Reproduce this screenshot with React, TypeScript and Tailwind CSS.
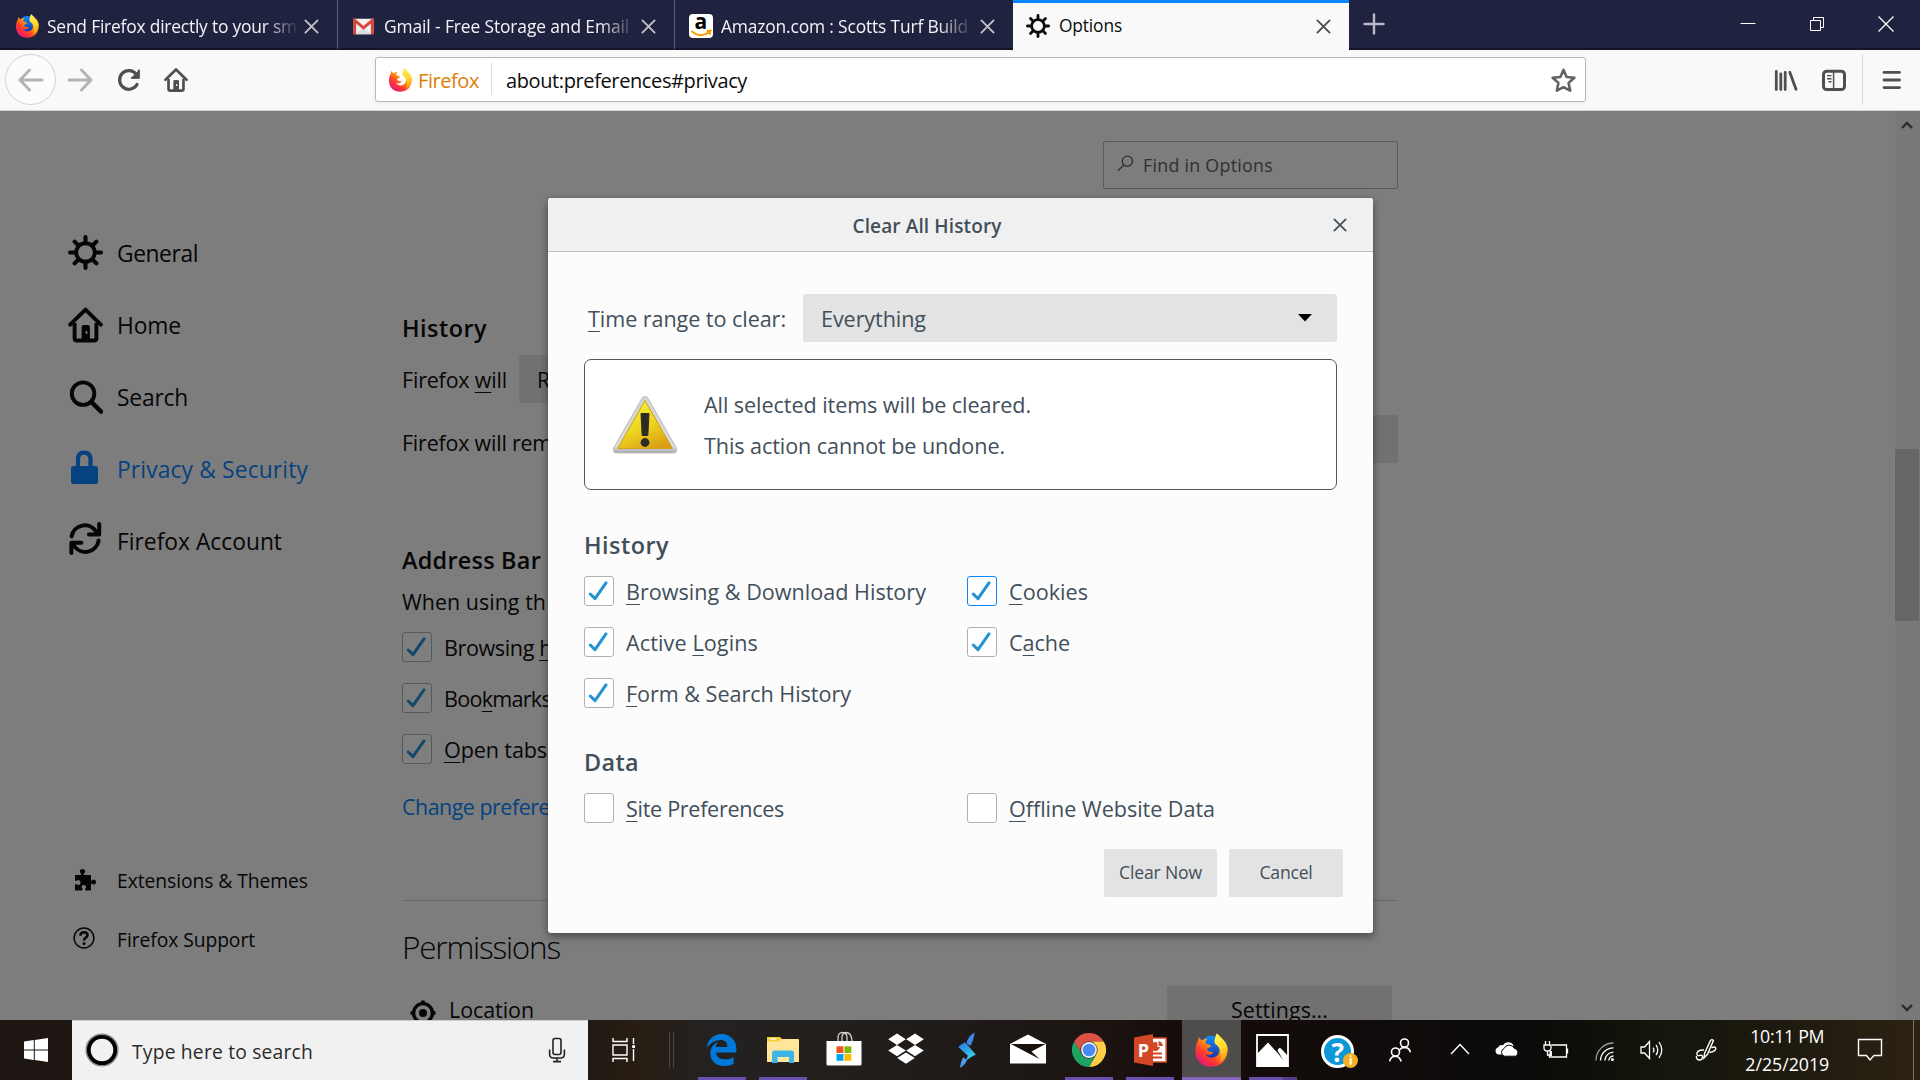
import React, { useLayoutEffect, useRef } from "react";

/* Single line of text whose tracking is computed so that it spans `w` pixels. */
function T({ w, className = "", children }: { w?: number; className?: string; children: React.ReactNode }) {
  const ref = useRef<HTMLSpanElement>(null);
  useLayoutEffect(() => {
    const el = ref.current;
    if (!el || !w) return;
    el.style.letterSpacing = "0px";
    const natural = el.getBoundingClientRect().width;
    const n = (el.textContent || "").length;
    el.style.letterSpacing = `${(w - natural) / n}px`;
  }, [w]);
  return (
    <span ref={ref} className={`inline-block w-fit shrink-0 whitespace-nowrap ${className}`}>
      {children}
    </span>
  );
}

const U = ({ children }: { children: React.ReactNode }) => (
  <span className="underline decoration-1 underline-offset-[4px] [text-decoration-skip-ink:none]">{children}</span>
);

function Firefox({ id, hollow, className }: { id: string; hollow?: boolean; className: string }) {
  return (
    <svg viewBox="0 0 32 32" className={className}>
      <defs>
        <linearGradient id={`${id}a`} x1="0.85" y1="0.1" x2="0.2" y2="0.95">
          <stop offset="0" stopColor="#ffd31a" />
          <stop offset="0.4" stopColor="#ff9a0c" />
          <stop offset="0.7" stopColor="#ff3a2e" />
          <stop offset="1" stopColor="#e5177b" />
        </linearGradient>
        <linearGradient id={`${id}b`} x1="0.5" y1="0" x2="0.5" y2="1">
          <stop offset="0" stopColor="#0a8cff" />
          <stop offset="1" stopColor="#1b2f9c" />
        </linearGradient>
        <linearGradient id={`${id}c`} x1="0.3" y1="0" x2="0.6" y2="1">
          <stop offset="0" stopColor="#fff44f" />
          <stop offset="0.6" stopColor="#ffd22a" />
          <stop offset="1" stopColor="#ff980e" />
        </linearGradient>
      </defs>
      <circle cx="16.5" cy="14" r="11.3" fill={hollow ? "#ffffff" : `url(#${id}b)`} />
      <path
        d="M4.6 3.6C4.4 5.6 4 7.4 2.4 10C-1 19 3 31.8 16 31.8C26 31.8 32 24.5 31.5 15C31.3 9 27 6 21.5 .4C20 4 18.8 7 19.8 10C24 12 25 16 23 20C20 24.4 13 24.2 10.8 20C14 21.4 17.2 20.4 18.3 17.8C15 18 12 17.2 12.3 14.8L16 12.6C16 10.4 12 11 11 9.4C10.6 8 11.6 6.4 13 5.4C10.4 5.2 9 6 8 7C6.4 6.4 5.4 5.2 4.6 3.6Z"
        fill={`url(#${id}a)`}
      />
      <path
        d="M21.5 .4C27 6 31.3 9 31.5 15C31.5 20 28 25 24 27C27 21 26 14 19.8 10C18.8 7 20 4 21.5 .4Z"
        fill={`url(#${id}c)`}
      />
    </svg>
  );
}

const Gear = ({ className }: { className: string }) => (
  <svg viewBox="0 0 34 34" className={className} fill="none" stroke="currentColor" strokeLinecap="round">
    <circle cx="17" cy="17" r="9" strokeWidth="3.8" />
    <path
      strokeWidth="4"
      d="M17 2V7M17 27V32M2 17H7M27 17H32M6.4 6.4L9.5 9.5M24.5 24.5L27.6 27.6M27.6 6.4L24.5 9.5M9.5 24.5L6.4 27.6"
    />
  </svg>
);

const HomeIcon = ({ className }: { className: string }) => (
  <svg viewBox="0 0 36 36" className={className}>
    <path
      d="M2.2 17.6L18 2.2L33.8 17.6"
      fill="none"
      stroke="currentColor"
      strokeWidth="4"
      strokeLinecap="round"
      strokeLinejoin="round"
    />
    <path d="M6.8 16V31.5Q6.8 34 9.3 34H26.7Q29.2 34 29.2 31.5V16" fill="none" stroke="currentColor" strokeWidth="4" />
    <path fillRule="evenodd" d="M14 34V20Q14 18 16 18H20.5Q22.5 18 22.5 20V34ZM18 24.5V27H20V24.5Z" fill="currentColor" />
  </svg>
);

const X = ({ className, sw = 2 }: { className: string; sw?: number }) => (
  <svg viewBox="0 0 16 16" className={className} fill="none" stroke="currentColor" strokeWidth={sw} strokeLinecap="round">
    <path d="M1.5 1.5L14.5 14.5M14.5 1.5L1.5 14.5" />
  </svg>
);

function Tab({
  icon,
  title,
  w,
  className,
}: {
  icon: React.ReactNode;
  title: string;
  w: number;
  className: string;
}) {
  return (
    <div className={`flex h-[50px] shrink-0 items-center border-b-2 border-b-[#14142b] pr-[18px] text-[#f3f3f7] ${className}`}>
      <div className="flex w-[25px] shrink-0 justify-center">{icon}</div>
      <div className="ml-2 w-[252px] shrink-0 overflow-hidden pt-[3px] text-[17.4px] leading-6 [mask-image:linear-gradient(to_right,black_86%,transparent)]">
        <T w={w}>{title}</T>
      </div>
      <X className="ml-auto mt-1 size-[15px] text-[#c3c3cd]" />
    </div>
  );
}

function Chrome() {
  return (
    <header className="shrink-0">
      <div className="flex h-[50px] bg-[#202340]">
        <Tab
          className="w-[338px] border-r border-r-[#5d5f78] pl-[14px]"
          icon={<Firefox id="t" className="mt-1 size-6" />}
          title="Send Firefox directly to your sm"
          w={250}
        />
        <Tab
          className="w-[337px] border-r border-r-[#5d5f78] pl-[13px]"
          icon={
            <svg viewBox="0 0 22 17" className="mt-1 h-[17px] w-[21px]">
              <rect x="0.5" y="0.5" width="21" height="16" rx="1" fill="#f2f2f2" />
              <path d="M3 16.5L11 9L19 16.5Z" fill="#dcdcdc" />
              <path d="M1.8 16.5V2L11 10L20.2 2V16.5" fill="none" stroke="#d9453a" strokeWidth="3" />
            </svg>
          }
          title="Gmail - Free Storage and Email"
          w={245}
        />
        <Tab
          className="w-[338px] pl-[13px]"
          icon={
            <div className="relative mt-1 h-6 w-6 rounded-[4px] bg-white">
              <span className="absolute left-[6px] top-[-5px] text-[21px] font-bold leading-6 text-black">a</span>
              <svg viewBox="0 0 24 24" className="absolute inset-0 size-6" fill="none" stroke="#ff9900" strokeWidth="2">
                <path d="M2.5 17Q11 24.5 20 18.5M17.5 17.2L21.5 16.6L20.6 20.4" />
              </svg>
            </div>
          }
          title="Amazon.com : Scotts Turf Build"
          w={247}
        />
        <div className="flex h-[50px] w-[336px] items-center border-t-[3px] border-[#0a84ff] bg-[#f9f9fa] pl-[13px] pr-[18px]">
          <Gear className="-mt-px size-[24px] text-[#0c0c0d]" />
          <T w={63} className="-mt-[3px] ml-[9px] text-[17.4px] leading-6 text-[#0c0c0d]">
            Options
          </T>
          <X className="-mt-px ml-auto size-[15px] text-[#4d4d4f]" />
        </div>
        <div className="flex flex-1 items-center border-b-2 border-[#14142b] pl-[14px]">
          <svg viewBox="0 0 22 22" className="size-[22px]" stroke="#b9bac6" strokeWidth="2.4" strokeLinecap="round">
            <path d="M11 1.5V20.5M1.5 11H20.5" />
          </svg>
          <div className="ml-auto mr-[26px] flex items-center gap-[53px] text-white">
            <svg viewBox="0 0 16 16" className="size-4" stroke="currentColor" strokeWidth="1">
              <path d="M0.5 7.5H15.5" />
            </svg>
            <svg viewBox="0 0 16 16" className="size-4" fill="none" stroke="currentColor" strokeWidth="1">
              <path d="M1.5 4.5H11.5V14.5H1.5ZM4.5 4.5V1.5H14.5V11.5H11.5" />
            </svg>
            <svg viewBox="0 0 16 16" className="size-4" fill="none" stroke="currentColor" strokeWidth="1.3">
              <path d="M0.5 0.5L15.5 15.5M15.5 0.5L0.5 15.5" />
            </svg>
          </div>
        </div>
      </div>

      <div className="flex h-[61px] items-center border-b border-[#d4d4d4] bg-[#f9f9fa] pl-[5px] text-[#4f4f51]">
        <div className="-mt-px flex size-[51px] shrink-0 items-center justify-center rounded-full border border-[#d3d3d4] bg-[#fcfcfc] text-[#b4b4b5]">
          <svg viewBox="0 0 26 24" className="h-6 w-[26px]" fill="none" stroke="currentColor" strokeWidth="3" strokeLinecap="round" strokeLinejoin="round">
            <path d="M24 12H2M11.5 2L2 12L11.5 22" />
          </svg>
        </div>
        <svg viewBox="0 0 26 24" className="ml-[11px] h-6 w-[26px] text-[#b4b4b5]" fill="none" stroke="currentColor" strokeWidth="3" strokeLinecap="round" strokeLinejoin="round">
          <path d="M2 12H24M14.5 2L24 12L14.5 22" />
        </svg>
        <svg viewBox="0 0 24 24" className="ml-[24px] size-6" fill="none" stroke="currentColor" strokeWidth="3.2" strokeLinecap="round">
          <path d="M20 16.5A9.3 9.3 0 1 1 19.2 6.2" />
          <path d="M22.5 1.6V10.6H13.6Z" fill="currentColor" stroke="none" />
          <path d="M21.8 2.6V9.8H15" strokeWidth="2" strokeLinejoin="round" />
        </svg>
        <HomeIcon className="ml-[23px] size-[24px]" />

        <div className="-mt-[2px] ml-[187px] flex h-[45px] w-[1211px] items-center rounded-[3px] border border-[#b8b8b8] bg-white pl-3 pr-[9px] shadow-[0_1px_4px_rgba(0,0,0,0.06)]">
          <Firefox id="u" hollow className="mt-px size-[24px]" />
          <T w={61} className="ml-[6px] pt-[3px] text-[20px] leading-7 text-[#e07c06]">
            Firefox
          </T>
          <div className="ml-3 h-8 w-px bg-[#dcdcdc]" />
          <T w={241} className="ml-[14px] pt-[3px] text-[20px] leading-7 text-[#0c0c0d]">
            about:preferences#privacy
          </T>
          <svg viewBox="0 0 24 24" className="ml-auto mt-[2px] size-[25px]" fill="none" stroke="#626264" strokeWidth="2.5" strokeLinejoin="round">
            <path d="M12 1.8L15 8.6L22.4 9.3L16.9 14.3L18.4 21.8L12 18.4L5.6 21.8L7.1 14.3L1.6 9.3L9 8.6Z" />
          </svg>
        </div>

        <svg viewBox="0 0 24 24" className="-mt-px ml-[188px] size-6" stroke="currentColor" strokeWidth="2.8" strokeLinecap="round">
          <path d="M2.3 3.3V21.5M6.8 5.8V21.5M11.2 4.3V21.5M15.8 4.3L22 21.3" />
        </svg>
        <svg viewBox="0 0 26 24" className="-mt-px ml-[23px] h-6 w-[26px]" fill="none" stroke="currentColor">
          <rect x="2.5" y="3.2" width="21" height="18.4" rx="3.2" strokeWidth="3" />
          <path d="M12.6 3V21" strokeWidth="1.5" />
          <path d="M6 7.6H10.5M6 10.7H10.5M7.5 13.8H10.5" strokeWidth="1.4" />
        </svg>
        <div className="-mt-px ml-[15px] h-[51px] w-px bg-[#dadadb]" />
        <svg viewBox="0 0 20 20" className="-mt-px ml-[19px] size-5" stroke="currentColor" strokeWidth="2.8" strokeLinecap="round">
          <path d="M2 2.4H17.5M2 10H17.5M2 17.6H17.5" />
        </svg>
      </div>
    </header>
  );
}

function NavItem({ icon, label, w, className = "" }: { icon: React.ReactNode; label: string; w: number; className?: string }) {
  return (
    <div className={`flex h-[72px] items-center ${className}`}>
      <div className="mr-[14px] flex w-9 justify-start">{icon}</div>
      <T w={w} className="pt-[2px] text-[22.8px] leading-8">
        {label}
      </T>
    </div>
  );
}

function Sidebar() {
  return (
    <nav className="flex w-[402px] shrink-0 flex-col pl-[67px] pt-[106px] text-[#060606]">
      <NavItem icon={<Gear className="-mt-[2px] ml-px size-[35px]" />} label="General" w={81} />
      <NavItem icon={<HomeIcon className="ml-px size-[36px]" />} label="Home" w={64} />
      <NavItem
        icon={
          <svg viewBox="0 0 36 36" className="-mt-px ml-px size-[36px]" fill="none" stroke="currentColor" strokeLinecap="round">
            <circle cx="15.5" cy="14.5" r="11.6" strokeWidth="4" />
            <path d="M24 23L34 33" strokeWidth="4.6" />
          </svg>
        }
        label="Search"
        w={71}
      />
      <NavItem
        icon={
          <svg viewBox="0 0 36 36" className="-mt-[2px] size-[36px]">
            <path d="M11 18V9.5Q11 2.6 17.2 2.6Q23.5 2.6 23.5 9.5V18" fill="none" stroke="currentColor" strokeWidth="4.2" />
            <rect x="4" y="16" width="27" height="18" rx="2.6" fill="currentColor" />
          </svg>
        }
        label="Privacy & Security"
        w={191}
        className="text-[#05427f]"
      />
      <NavItem
        icon={
          <svg viewBox="0 0 36 36" className="-mt-[7px] size-[36px]" fill="none" stroke="currentColor" strokeWidth="4" strokeLinecap="round" strokeLinejoin="round">
            <path d="M4.6 16.4A13.4 13.4 0 0 1 29 11.4M32.2 4V14.4H22" />
            <path d="M31.6 20.6A13.4 13.4 0 0 1 7.2 26M4.4 33V22.8H14.4" />
          </svg>
        }
        label="Firefox Account"
        w={165}
      />
      <div className="mt-[274px] flex h-[59px] items-center">
        <svg viewBox="0 0 22 22" className="-mt-[2px] ml-[7px] mr-[21px] size-[22px]" fill="currentColor">
          <path d="M1 6H7V4.5Q5.8 3.8 5.8 2.6A2.7 2.5 0 0 1 11.2 2.6Q11.2 3.8 10 4.5V6H17V11.5H18.3Q18.8 10.6 20 10.6A1.9 2.4 0 0 1 20 15.6Q18.8 15.6 18.3 14.7H17V21.5H11.3V19.5Q12.1 18.9 12.1 18A2.3 2 0 0 0 7.5 18Q7.5 18.9 8.4 19.5V21.5H1V15.2H2.8Q3.4 16 4.4 16A2.2 2.5 0 0 0 4.4 11Q3.4 11 2.8 11.8H1Z" />
        </svg>
        <T w={191} className="text-[19.3px] leading-7">
          Extensions &amp; Themes
        </T>
      </div>
      <div className="flex h-[59px] items-center">
        <svg viewBox="0 0 22 22" className="-mt-1 ml-[6px] mr-[22px] size-[22px]" fill="none" stroke="currentColor">
          <circle cx="11" cy="11" r="9.9" strokeWidth="1.5" />
          <path d="M7.4 8.6Q7.6 5.2 11 5.2Q14.5 5.2 14.5 8.1Q14.5 9.8 12.6 10.8Q11.1 11.6 11.1 13.4" strokeWidth="2.6" />
          <circle cx="11.1" cy="16.6" r="1.1" fill="currentColor" />
        </svg>
        <T w={138} className="text-[19.3px] leading-7">
          Firefox Support
        </T>
      </div>
    </nav>
  );
}

function Check({
  on,
  dim,
  focus,
  w,
  children,
}: {
  on?: boolean;
  dim?: boolean;
  focus?: boolean;
  w?: number;
  children: React.ReactNode;
}) {
  const box = dim ? "border-[#595959] bg-[#7f7f7f]" : focus ? "border-[#0a84ff] bg-white" : "border-[#b1b1b1] bg-white";
  return (
    <div className="flex h-[30px] items-center">
      <div className={`flex size-[30px] shrink-0 items-center justify-center rounded-[3px] border ${box}`}>
        {on && (
          <svg viewBox="0 0 20 20" className="-ml-[2px] size-5" fill="none" stroke={dim ? "#12496a" : "#2292d0"} strokeWidth="3" strokeLinecap="round" strokeLinejoin="round">
            <path d="M2.3 13L7 17.6L18 1.9" />
          </svg>
        )}
      </div>
      <T w={w} className="ml-3 pt-px text-[21.6px] leading-7">
        {children}
      </T>
    </div>
  );
}

function Preferences() {
  return (
    <main className="flex w-[996px] shrink-0 flex-col pt-[30px] text-[#060606]">
      <div className="ml-auto flex h-12 w-[295px] shrink-0 items-center rounded-[2px] border border-[#5a5a5a] pl-[13px] text-[#303030]">
        <svg viewBox="0 0 18 18" className="-mt-1 mr-[9px] size-[17px]" fill="none" stroke="currentColor" strokeWidth="1.4">
          <circle cx="11" cy="6.6" r="5.4" />
          <path d="M7.2 10.6L1 16.6" />
        </svg>
        <T w={130} className="text-[17.8px] leading-6">
          Find in Options
        </T>
      </div>
      <h2 className="mt-[123px] shrink-0 text-[23.4px] font-semibold leading-8">
        <T w={85}>History</T>
      </h2>
      <div className="mt-[11px] flex h-12 shrink-0 items-center text-[21.4px]">
        <T w={105} className="pt-[2px] leading-7">
          Firefox <U>w</U>ill
        </T>
        <div className="ml-3 flex h-12 w-[400px] items-center rounded-[2px] bg-[#717171] pl-[18px] pt-[2px]">R</div>
      </div>
      <div className="mt-3 flex h-12 shrink-0 justify-between text-[21.4px]">
        <T w={150} className="pt-[14px] leading-7">
          Firefox will rem
        </T>
        <div className="h-12 w-[160px] rounded-[2px] bg-[#717171]" />
      </div>
      <h2 className="mt-[81px] shrink-0 text-[23.4px] font-semibold leading-8">
        <T w={139}>Address Bar</T>
      </h2>
      <T w={144} className="mt-3 text-[21.4px] leading-7">
        When using th
      </T>
      <div className="mt-4 flex shrink-0 flex-col gap-[21px]">
        <Check on dim w={108}>
          Browsing <U>h</U>
        </Check>
        <Check on dim w={107}>
          Boo<U>k</U>marks
        </Check>
        <Check on dim w={103}>
          <U>O</U>pen tabs
        </Check>
      </div>
      <T w={148} className="mt-[29px] text-[21.4px] leading-7 text-[#05427f]">
        Change prefere
      </T>
      <div className="mt-[79px] h-px shrink-0 bg-[#686868]" />
      <h1 className="mt-6 shrink-0 text-[31.5px] font-light leading-[44px]">
        <T w={158}>Permissions</T>
      </h1>
      <div className="mr-[6px] mt-[17px] flex h-12 shrink-0 items-center text-[21.4px]">
        <svg viewBox="0 0 26 26" className="ml-2 mt-[6px] size-[26px]" fill="none" stroke="currentColor">
          <circle cx="13" cy="13" r="9.4" strokeWidth="3.4" />
          <circle cx="13" cy="13" r="4" fill="currentColor" stroke="none" />
          <path d="M13 0.5V4M13 22V25.5M0.5 13H4M22 13H25.5" strokeWidth="3.6" />
        </svg>
        <T w={85} className="ml-[13px] leading-7">
          Location
        </T>
        <div className="ml-auto flex h-12 w-[225px] items-center justify-center rounded-[2px] bg-[#717171]">
          <T w={97} className="leading-7">
            Settings...
          </T>
        </div>
      </div>
    </main>
  );
}

function Dialog() {
  return (
    <section className="absolute left-[548px] top-[87px] flex h-[735px] w-[825px] flex-col rounded-[3px] bg-[#fcfcfc] text-[#424f5a] shadow-[0_3px_9px_rgba(0,0,0,0.45)]">
      <header className="relative flex h-[54px] shrink-0 items-center justify-center rounded-t-[3px] border-b border-[#bdbdbd] bg-[#f0f0f0]">
        <T w={149} className="-ml-[67px] pt-[2px] text-[19px] font-semibold leading-7">
          Clear All History
        </T>
        <X className="absolute right-[26px] top-5 size-[14px]" />
      </header>
      <div className="flex flex-col px-9 pt-[42px]">
        <div className="flex h-12 items-center text-[21.6px]">
          <T w={198} className="ml-1 pt-[2px] leading-7">
            <U>T</U>ime range to clear:
          </T>
          <div className="ml-auto flex h-12 w-[534px] items-center rounded-[3px] bg-[#e3e3e3] pl-[18px] pr-[25px]">
            <T w={105} className="pt-[2px] leading-7">
              Everything
            </T>
            <svg viewBox="0 0 14 8" className="ml-auto h-[8px] w-[14px]">
              <path d="M0 0H14L7 7.5Z" fill="#000" />
            </svg>
          </div>
        </div>
        <div className="mt-[17px] flex h-[131px] items-center rounded-[7px] border border-[#565656] bg-white pl-[27px]">
          <svg viewBox="0 0 66 60" className="h-[60px] w-[66px]">
            <defs>
              <linearGradient id="warn" x1="0.3" y1="0" x2="0.8" y2="1">
                <stop offset="0" stopColor="#f5ee3c" />
                <stop offset="0.5" stopColor="#eed61f" />
                <stop offset="1" stopColor="#d99a14" />
              </linearGradient>
              <linearGradient id="rim" x1="0" y1="0" x2="0" y2="1">
                <stop offset="0" stopColor="#d6d6d6" />
                <stop offset="0.9" stopColor="#dcdcdc" />
                <stop offset="1" stopColor="#a2a2a2" />
              </linearGradient>
            </defs>
            <path d="M33 1.5Q35 1.5 36 3.5L64.5 53.5Q65.5 58 61 58H5Q.5 58 1.5 53.5L30 3.5Q31 1.5 33 1.5Z" fill="url(#rim)" stroke="#c2c2c2" strokeWidth="1.2" />
            <path d="M33 5.5L60.5 53.5H5.5Z" fill="url(#warn)" stroke="#c9a51b" strokeWidth="1" strokeLinejoin="round" />
            <path d="M29 18.5H37L35.8 40.5H30.2Z" fill="#2c2c24" stroke="#2c2c24" strokeWidth="1" strokeLinejoin="round" />
            <circle cx="33" cy="47.5" r="4.4" fill="#2c2c24" />
          </svg>
          <div className="ml-[26px] flex flex-col text-[21.6px] leading-[41px]">
            <T w={327}>All selected items will be cleared.</T>
            <T w={301}>This action cannot be undone.</T>
          </div>
        </div>
        <h2 className="mt-[39px] text-[23.4px] font-semibold leading-8">
          <T w={85}>History</T>
        </h2>
        <div className="mt-[15px] grid grid-cols-[383px_1fr] gap-y-[21px]">
          <Check on w={300}>
            <U>B</U>rowsing &amp; Download History
          </Check>
          <Check on focus w={79}>
            <U>C</U>ookies
          </Check>
          <Check on w={132}>
            Active <U>L</U>ogins
          </Check>
          <Check on w={61}>
            C<U>a</U>che
          </Check>
          <Check on w={225}>
            <U>F</U>orm &amp; Search History
          </Check>
        </div>
        <h2 className="mt-[38px] text-[23.4px] font-semibold leading-8">
          <T w={55}>Data</T>
        </h2>
        <div className="mt-[15px] grid grid-cols-[383px_1fr]">
          <Check w={158}>
            <U>S</U>ite Preferences
          </Check>
          <Check w={206}>
            <U>O</U>ffline Website Data
          </Check>
        </div>
        <div className="-mr-[6px] mt-[26px] flex justify-end gap-3 text-[17.6px]">
          <button className="flex h-12 w-[113px] items-center justify-center rounded-[2px] bg-[#e3e3e3] pb-px">
            <T w={83}>Clear Now</T>
          </button>
          <button className="flex h-12 w-[114px] items-center justify-center rounded-[2px] bg-[#e3e3e3] pb-px">
            <T w={53}>Cancel</T>
          </button>
        </div>
      </div>
    </section>
  );
}

function Scrollbar() {
  return (
    <div className="ml-auto flex w-[26px] shrink-0 flex-col items-center border-l border-[#808080] bg-[#787878] pr-px text-[#2b2b2b]">
      <svg viewBox="0 0 12 8" className="mt-[10px] h-2 w-3" fill="none" stroke="currentColor" strokeWidth="2.4">
        <path d="M1 7L6 2L11 7" />
      </svg>
      <div className="mt-[320px] h-[172px] w-full bg-[#666666]" />
      <svg viewBox="0 0 12 8" className="mb-2 mt-auto h-2 w-3" fill="none" stroke="currentColor" strokeWidth="2.4">
        <path d="M1 1L6 6L11 1" />
      </svg>
    </div>
  );
}

function TaskButton({
  children,
  bar,
  active,
  second,
}: {
  children: React.ReactNode;
  bar?: boolean;
  active?: boolean;
  second?: boolean;
}) {
  return (
    <div className="flex h-full w-[61.2px] shrink-0 flex-col items-center">
      <div className={`flex w-[59px] flex-1 items-center justify-center ${active ? "bg-[#4f4d4c]" : ""}`}>{children}</div>
      <div className={`flex h-[3px] ${active ? "w-[59px] bg-[#8465bb]" : bar ? "w-12 bg-[#6c50b0]" : "w-12"}`}>
        {second && <div className="ml-auto h-[3px] w-[14px] bg-[#523e88]" />}
      </div>
    </div>
  );
}

function Taskbar() {
  return (
    <footer className="flex h-[60px] shrink-0 bg-[linear-gradient(to_right,#1e1612_0%,#1f1813_30%,#271d13_33%,#242221_37%,#211e1b_45%,#1c1613_56%,#150c0a_62%,#100c0b_72%,#0b0b09_80%,#15160c_87%,#1d190e_92%,#2c2214_100%)] text-white">
      <div className="flex w-[72px] shrink-0 items-center justify-center">
        <svg viewBox="0 0 24 24" className="size-6" fill="#fff">
          <path d="M0 3.4L9.8 2V11.4H0ZM10.8 1.9L24 0V11.4H10.8ZM0 12.4H9.8V21.9L0 20.5ZM10.8 12.4H24V24L10.8 22.1Z" />
        </svg>
      </div>
      <div className="flex w-[516px] shrink-0 items-center border-t border-[#cfcfcf] bg-[#f1f1f1] pl-[13px] pr-[21px]">
        <svg viewBox="0 0 34 34" className="-mt-px size-[34px]" fill="none">
          <circle cx="17" cy="17" r="15.6" stroke="#8a8a8a" strokeWidth="2" />
          <circle cx="17" cy="17" r="13.2" stroke="#000" strokeWidth="3.8" />
        </svg>
        <T w={181} className="ml-[13px] pt-[3px] text-[19.3px] leading-7 text-[#2b2b2b]">
          Type here to search
        </T>
        <svg viewBox="0 0 20 26" className="-mt-px ml-auto h-[26px] w-5" fill="none" stroke="#222" strokeWidth="1.6">
          <rect x="6" y="1.5" width="8" height="16" rx="2" />
          <path d="M2.6 12.5V17Q2.6 21 6.5 21H13.5Q17.4 21 17.4 17V12.5M10 21V24.4M6 24.6H14" />
        </svg>
      </div>
      <div className="flex w-[103.4px] shrink-0 items-center pl-[23px]">
        <svg viewBox="0 0 26 24" className="h-6 w-[26px]" fill="none" stroke="#fff" strokeWidth="1.4">
          <path d="M2 0V3.5H16V0M2 7H16V17H2ZM2 24V20.5H16V24M22.5 0V6M22.5 11V23" />
          <rect x="21.2" y="7.2" width="2.8" height="2.8" fill="#fff" stroke="none" />
        </svg>
        <div className="ml-[32px] h-9 w-[5px] border-x border-[#4a4744]" />
      </div>
      <TaskButton bar>
        <svg viewBox="24 8 464 496" className="mt-[3px] h-8 w-[31px]" fill="#0078d7">
          <path d="M25.714 228.163c.111-.162.23-.323.342-.485-.021.162-.045.323-.065.485h-.277zm460.572 15.508c0-44.032-7.754-84.465-28.801-122.405C416.498 47.879 343.912 8.001 258.893 8.001 118.962 7.724 40.617 113.214 26.056 227.679c42.429-61.312 117.073-121.376 220.375-124.966 0 0 109.666 0 99.419 104.957H169.997c6.369-37.386 18.554-58.986 34.339-78.926-75.048 34.9-121.85 96.096-120.742 188.315.83 71.448 50.124 144.836 120.743 171.976 83.357 31.847 192.776 7.2 240.132-21.323V363.307c-80.864 56.506-270.871 60.925-272.255-67.572h314.073v-52.064z" />
        </svg>
      </TaskButton>
      <TaskButton bar>
        <svg viewBox="0 0 32 28" className="mt-[2px] h-7 w-8">
          <path d="M0 2Q0 1 1 1H12L15 3H31Q32 3 32 4V26H0Z" fill="#ffe69a" />
          <path d="M0 5V2Q0 1 1 1H13L14.5 3L12 5.5H0Z" fill="#fccd3e" />
          <path d="M3 3H9" stroke="#fff" strokeWidth="1.2" />
          <path d="M5 27V17Q5 14.5 7 14.5H25Q27 14.5 27 17V27H22V21H10.5V27Z" fill="#3cb4e6" />
        </svg>
      </TaskButton>
      <TaskButton>
        <svg viewBox="0 0 36 36" className="mt-px size-[36px]">
          <path d="M12 10V7Q12 1.5 16.5 1.5Q21 1.5 21 7V10M16 10V6Q16.5 1.5 20.5 1.5Q25.5 2 26 10" fill="none" stroke="#cfcfcf" strokeWidth="1.3" />
          <path d="M.5 10H35.5V33Q35.5 34.5 34 34.5H2Q.5 34.5 .5 33Z" fill="#fff" />
          <path d="M10.5 15.3H17.4V22H10.5Z" fill="#f25022" />
          <path d="M18.4 15.3H25.3V22H18.4Z" fill="#7fba00" />
          <path d="M10.5 23H17.4V29.8H10.5Z" fill="#00a4ef" />
          <path d="M18.4 23H25.3V29.8H18.4Z" fill="#ffb900" />
        </svg>
      </TaskButton>
      <TaskButton>
        <svg viewBox="0 0 36 32" className="ml-px mt-px h-8 w-9" fill="#fff">
          <path d="M9 .5L17.8 6.2L9 12L.2 6.2ZM27 .5L35.8 6.2L27 12L18.2 6.2ZM9 12L17.8 17.6L9 23.2L.2 17.6ZM27 12L35.8 17.6L27 23.2L18.2 17.6ZM9.2 25L18 19.4L26.8 25L18 30.8Z" />
        </svg>
      </TaskButton>
      <TaskButton>
        <svg viewBox="0 0 20 38" className="mt-1 h-[37px] w-5">
          <defs>
            <linearGradient id="s" x1="0" y1="0" x2="0.6" y2="1">
              <stop offset="0" stopColor="#2f6fe0" />
              <stop offset="1" stopColor="#35d6ea" />
            </linearGradient>
          </defs>
          <path d="M18 .5Q17 8 13.5 14.5L9.5 11.5Q10.5 4.5 18 .5Z" fill="#3f86e6" />
          <path d="M8 10.5L19 23Q14 25.5 8.5 29.5L11 24.5L1 15.5Q2.5 13.5 8 10.5Z" fill="url(#s)" />
          <path d="M2.5 37Q3.5 31 6 26L10 28.5Q9 33.5 2.5 37Z" fill="#4f98ec" />
        </svg>
      </TaskButton>
      <TaskButton>
        <svg viewBox="0 0 36 30" className="mt-px h-[30px] w-9">
          <path d="M0 10L18 .5L36 10V29.5H0Z" fill="#fff" />
          <path d="M1 10H35.5L21.5 17.5L29.5 25Z" fill="#17110e" />
        </svg>
      </TaskButton>
      <TaskButton bar>
        <svg viewBox="0 0 32 32" className="mt-[3px] size-[34px]">
          <path d="M2.14 8A16 16 0 0 1 29.86 8H16A8 8 0 0 0 9.07 20Z" fill="#dd5144" />
          <path d="M29.86 8A16 16 0 0 1 16 32L22.93 20A8 8 0 0 0 16 8Z" fill="#ffcd46" />
          <path d="M16 32A16 16 0 0 1 2.14 8L9.07 20A8 8 0 0 0 22.93 20Z" fill="#1da362" />
          <circle cx="16" cy="16" r="7.5" fill="#f1f1f1" />
          <circle cx="16" cy="16" r="5.9" fill="#4a8af4" />
        </svg>
      </TaskButton>
      <TaskButton bar>
        <div className="relative mt-[3px] h-8 w-[33px]">
          <svg viewBox="0 0 33 32" className="absolute inset-0 h-8 w-[33px]">
            <path d="M17 4H32.2V28H17Z" fill="#fff" stroke="#d24726" strokeWidth="1.6" />
            <path d="M19 19.5H28M19 23.5H28" stroke="#d24726" strokeWidth="2" />
            <path d="M19 8.5A4.6 4.6 0 1 1 19 16.5Z" fill="#d24726" />
            <path d="M24 12.5V6.5A5.5 5.5 0 0 1 29.5 12.5Z" fill="#d24726" stroke="#fff" strokeWidth="1.2" />
            <path d="M0 3.4L19 0V32L0 28.6Z" fill="#d24726" />
          </svg>
          <span className="absolute left-[4px] top-[4px] text-[18px] font-bold leading-6 text-white">P</span>
        </div>
      </TaskButton>
      <TaskButton active>
        <Firefox id="k" className="mt-[2px] size-[34px]" />
      </TaskButton>
      <TaskButton bar second>
        <svg viewBox="0 0 33 33" className="mt-[3px] size-[33px]">
          <path d="M1 1H32V32H1Z" fill="#14100e" stroke="#fff" strokeWidth="1.8" />
          <path d="M1 20L12 8.5L22 19.5L24 22L27.5 26.5L21.5 16.5Q23 13 25 14.5L32 22V32H1Z" fill="#fff" />
        </svg>
      </TaskButton>

      <div className="flex w-[70px] shrink-0 items-center justify-center pt-1">
        <div className="relative size-[34px]">
          <div className="flex size-[33px] items-center justify-center rounded-full border-[3px] border-white bg-[#0b97d8] text-[26px] font-bold leading-none text-white">
            ?
          </div>
          <div className="absolute bottom-[1px] right-[-3px] flex size-[15px] items-center justify-center rounded-full bg-[#f5b021] text-[13px] font-bold leading-none text-white">
            i
          </div>
        </div>
      </div>
      <div className="flex w-[54px] shrink-0 items-center justify-center">
        <svg viewBox="0 0 24 24" className="size-6" fill="none" stroke="#fff" strokeWidth="1.6">
          <circle cx="16.5" cy="5" r="4" />
          <circle cx="7.5" cy="14" r="4" />
          <path d="M11.5 11.8Q13.5 9.4 16.5 9.4Q21.5 9.6 22.4 14.4M1.6 23.4Q2.6 18.2 7.5 18.2Q11.5 18.4 13.2 23.4" />
        </svg>
      </div>
      <div className="flex w-[65px] shrink-0 items-center justify-center">
        <svg viewBox="0 0 20 12" className="-mt-[3px] h-3 w-5" fill="none" stroke="#fff" strokeWidth="1.4">
          <path d="M1 11L10 1.5L19 11" />
        </svg>
      </div>
      <div className="flex w-[31px] shrink-0 items-center justify-center">
        <svg viewBox="0 0 25 16" className="-mt-[2px] h-4 w-[25px]">
          <path d="M4 13.5A3.6 3.6 0 0 1 3 6.5A4 4 0 0 1 8 4.2A6 6 0 0 1 18.5 4.5L10 13.5Z" fill="#fff" />
          <path d="M9.5 15.2A4 4 0 0 1 9 7.6A5.6 5.6 0 0 1 19.3 7.4A4.1 4.1 0 0 1 20.5 15.2Z" fill="#fff" stroke="#0d0c0a" strokeWidth="1" />
        </svg>
      </div>
      <div className="flex w-[65px] shrink-0 items-center justify-center">
        <svg viewBox="0 0 26 18" className="-mt-px h-[18px] w-[26px]" fill="none" stroke="#fff" strokeWidth="1.3">
          <path d="M9 4H23.5V16H6.5V13M24.5 7.5V12.5" />
          <path d="M2.5 0V4M6.5 0V4M1 4H8V7Q8 10 4.5 10Q1 10 1 7ZM4.5 10V14H8" />
          <path d="M6.5 10H9V15H6.5Z" fill="#fff" stroke="none" />
        </svg>
      </div>
      <div className="flex w-[33px] shrink-0 items-center justify-center">
        <svg viewBox="0 0 20 20" className="mt-[3px] size-5" fill="none" stroke="#fff" strokeWidth="1.3">
          <path d="M1 18.5A17.5 17.5 0 0 1 18.5 1" stroke="#9a9a98" />
          <path d="M5.5 18.5A13 13 0 0 1 18.5 5.8M9.8 18.5A8.8 8.8 0 0 1 18.5 10.2M13.8 18.5A4.8 4.8 0 0 1 18.5 14" />
          <circle cx="17.4" cy="17.6" r="1.5" fill="#fff" stroke="none" />
        </svg>
      </div>
      <div className="flex w-[61px] shrink-0 items-center justify-center">
        <svg viewBox="0 0 24 20" className="h-5 w-6" fill="none" stroke="#fff" strokeWidth="1.3">
          <path d="M1 7H4.5L9.5 1.5V18.5L4.5 13H1Z" />
          <path d="M13 7.6Q15 10 13 12.4M16 4.8Q19.5 10 16 15.2M19 2Q24.5 10 19 18" />
        </svg>
      </div>
      <div className="flex w-[47px] shrink-0 items-center justify-center">
        <svg viewBox="0 0 22 24" className="h-6 w-[22px]" fill="none" stroke="#fff" strokeWidth="1.4">
          <path d="M9 20L9.5 15.5L15.5 2.5Q17 .8 18.4 2.6L12.6 16ZM9 12Q3 11.5 2 15Q1.5 18 4 17.6Q7.5 16.5 7.6 19Q7.4 22 4.6 22Q1.2 22 1.4 18M16.5 9.5Q20.5 8 20.8 10.6Q20.6 13.4 14.5 14.5" />
        </svg>
      </div>
      <div className="flex w-[116px] shrink-0 flex-col items-center justify-center text-[17.8px] leading-7">
        <T w={74}>10:11 PM</T>
        <T w={84}>2/25/2019</T>
      </div>
      <div className="flex w-[49px] shrink-0 items-center justify-center">
        <svg viewBox="0 0 26 24" className="h-6 w-[26px]" fill="none" stroke="#fff" strokeWidth="1.4">
          <path d="M1.5 1.5H24.5V17.5H17L13 22L9.5 17.5H1.5Z" />
        </svg>
      </div>
      <div className="ml-auto mr-[6px] w-px bg-[#77736c]" />
    </footer>
  );
}

export default function App() {
  return (
    <div className="flex h-[1080px] w-[1920px] flex-col overflow-hidden font-['Open_Sans','Noto_Sans',sans-serif]">
      <Chrome />
      <div className="relative flex h-[909px] shrink-0 overflow-hidden bg-[#7d7d7d]">
        <Sidebar />
        <Preferences />
        <Scrollbar />
        <Dialog />
      </div>
      <Taskbar />
    </div>
  );
}
